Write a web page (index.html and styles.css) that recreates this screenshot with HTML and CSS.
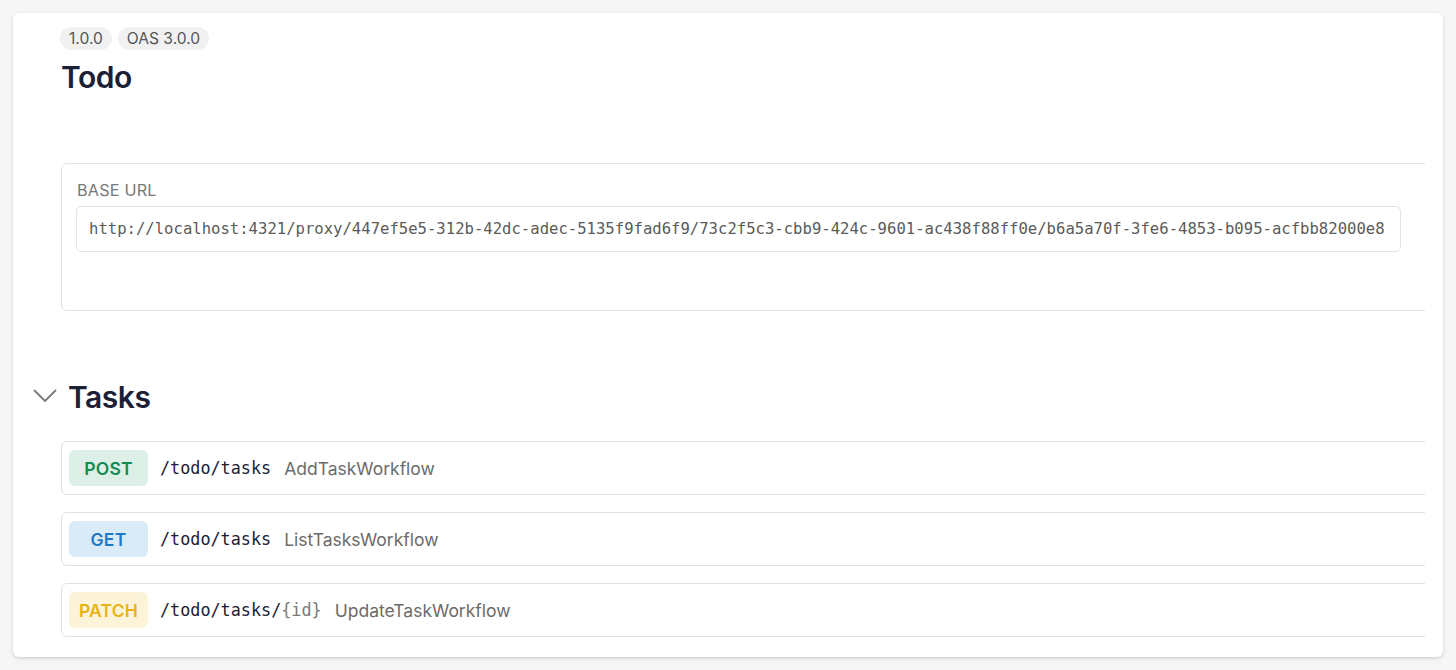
FILE: index.html
```html
<!DOCTYPE html>
<html lang="en">
<head>
<meta charset="utf-8">
<title>Todo</title>
<link rel="stylesheet" href="styles.css">
</head>
<body>
<div class="card">
  <div class="clip">
    <div class="content">
      <div class="versions">
        <span class="pill">1.0.0</span>
        <span class="pill">OAS 3.0.0</span>
      </div>
      <h1 class="title">Todo</h1>

      <div class="server-box">
        <div class="server-label">BASE URL</div>
        <div class="url-input">http://localhost:4321/proxy/447ef5e5-312b-42dc-adec-5135f9fad6f9/73c2f5c3-cbb9-424c-9601-ac438f88ff0e/b6a5a70f-3fe6-4853-b095-acfbb82000e8</div>
      </div>

      <div class="tag-header">
        <svg class="chevron" width="24" height="14" viewBox="0 0 24 14" fill="none" stroke="#7b7b7b" stroke-width="1.8" stroke-linecap="round" stroke-linejoin="round"><path d="M1.5 1.5 L12 12 L22.5 1.5"/></svg>
        <h2 class="tag-title">Tasks</h2>
      </div>

      <div class="ops">
        <div class="op">
          <span class="method post">POST</span>
          <span class="path">/todo/tasks</span>
          <span class="summary">AddTaskWorkflow</span>
        </div>
        <div class="op">
          <span class="method get">GET</span>
          <span class="path">/todo/tasks</span>
          <span class="summary">ListTasksWorkflow</span>
        </div>
        <div class="op">
          <span class="method patch">PATCH</span>
          <span class="path">/todo/tasks/<span class="param">{id}</span></span>
          <span class="summary">UpdateTaskWorkflow</span>
        </div>
      </div>
    </div>
  </div>
</div>
</body>
</html>
```
FILE: styles.css
```css
* { box-sizing: border-box; }

html, body {
  margin: 0;
  padding: 0;
}

body {
  background: #f7f7f7;
  padding: 13px;
  font-family: Inter, "Noto Sans", sans-serif;
  color: #1c2036;
}

.card {
  background: #ffffff;
  border-radius: 6px;
  box-shadow: 0 1px 3px rgba(0, 0, 0, 0.14), 0 2px 8px rgba(0, 0, 0, 0.06);
  height: 644px;
  padding-right: 18px;
  overflow: hidden;
}

.clip {
  overflow: hidden;
  height: 100%;
}

.content {
  padding: 14px 0 0 47px;
}

.versions {
  display: flex;
  gap: 6px;
}

.pill {
  display: inline-block;
  height: 23px;
  line-height: 23px;
  padding: 0 9px;
  border-radius: 12px;
  background: #f1f1f1;
  color: #555555;
  font-size: 15.6px;
}

.title {
  margin: 9px 0 0 1px;
  font-size: 30px;
  line-height: 36px;
  font-weight: 600;
  color: #1c2036;
  letter-spacing: -0.5px;
}

.server-box {
  margin-top: 68px;
  margin-left: 1px;
  width: 1400px;
  height: 148px;
  border: 1px solid #e3e3e3;
  border-radius: 6px;
  padding: 16px 14px 0 14px;
}

.server-label {
  font-size: 16.2px;
  line-height: 20px;
  color: #777777;
  letter-spacing: 0.2px;
  margin-left: 1px;
}

.url-input {
  margin-top: 6px;
  width: 1325px;
  height: 46px;
  border: 1px solid #e3e3e3;
  border-radius: 5px;
  padding: 0 12px;
  display: flex;
  align-items: center;
  font-family: "DejaVu Sans Mono", "Liberation Mono", monospace;
  font-size: 15.6px;
  color: #5a5a5a;
  white-space: nowrap;
}

.tag-header {
  display: flex;
  align-items: center;
  gap: 11px;
  margin: 68px 0 0 -27px;
}

.chevron {
  display: block;
  margin-top: -2px;
}

.tag-title {
  margin: 0;
  font-size: 30px;
  line-height: 36px;
  font-weight: 600;
  color: #1c2036;
  letter-spacing: -0.5px;
}

.ops {
  margin-top: 26px;
  margin-left: 1px;
  display: flex;
  flex-direction: column;
  gap: 17px;
}

.op {
  width: 1400px;
  height: 54px;
  border: 1px solid #e0e0e0;
  border-radius: 6px;
  padding: 0 7px;
  display: flex;
  align-items: center;
}

.method {
  width: 79px;
  height: 36px;
  border-radius: 6px;
  display: flex;
  align-items: center;
  justify-content: center;
  font-size: 17.5px;
  font-weight: 600;
  letter-spacing: 0.2px;
}

.method.post { background: #dcf0e7; color: #148a55; }
.method.get { background: #d9ebf7; color: #1f7ac6; }
.method.patch { background: #fcf3d9; color: #e8b414; }

.path {
  margin-left: 12px;
  font-family: "DejaVu Sans Mono", "Liberation Mono", monospace;
  font-size: 16.8px;
  color: #1c2036;
}

.param {
  color: #7a7a7a;
}

.summary {
  margin-left: 13px;
  font-size: 17.5px;
  color: #6b6b6b;
}
```
